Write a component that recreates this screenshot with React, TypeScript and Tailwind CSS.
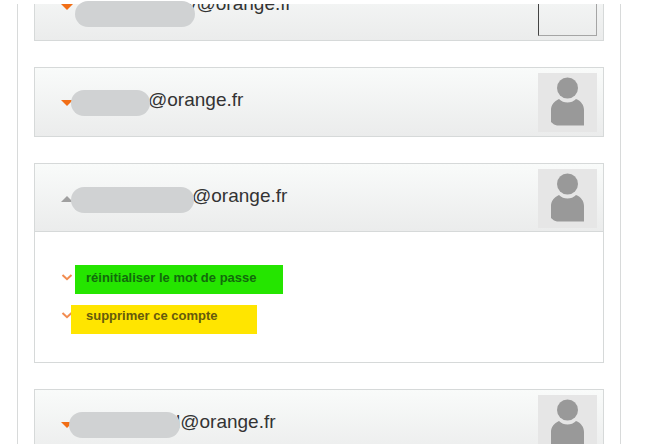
import React, { useState } from 'react';
import clsx from 'clsx';

interface Account {
    id: string;
    email: string;
    maskClass: string;
    emailClass: string;
    hasPhoto: boolean;
}

// The mask hides the first part of each address
const accounts: Account[] = [
    { id: 'a1', email: 'y@orange.fr', maskClass: 'ml-0.5 mt-5 w-[120px]', emailClass: '-ml-2', hasPhoto: false },
    { id: 'a2', email: '@orange.fr', maskClass: '-ml-0.5 mt-1.5 w-[79px]', emailClass: '-ml-0.5', hasPhoto: true },
    { id: 'a3', email: '@orange.fr', maskClass: '-ml-0.5 mt-2 w-[123px]', emailClass: '-ml-0.5', hasPhoto: true },
    { id: 'a4', email: 'l@orange.fr', maskClass: '-ml-1 mt-1.5 w-[111px]', emailClass: '-ml-1', hasPhoto: true },
];

function Avatar() {
    return (
        <svg viewBox="0 0 59 59" className="mt-[5px] size-[59px] shrink-0 self-start bg-[#e6e6e6]" aria-hidden="true">
            <circle cx="29.5" cy="15" r="10.5" fill="#999" />
            <path d="M21 26 C25.5 30.8 33.5 30.8 38 26 C43 28 46 32 46 37 V52.5 H19 L16 51.5 L13 49 V37 C13 32 16 28.5 21 26 Z" fill="#999" />
        </svg>
    );
}

function Arrow({ open }: { open: boolean }) {
    return (
        <svg viewBox="0 0 12 6" className="mt-1.5 h-1.5 w-3 shrink-0" aria-hidden="true">
            {open ? <path d="M0 6 L6 0 L12 6 Z" fill="#a0a0a0" /> : <path d="M0 0 H12 L6 6 Z" fill="#f16e16" />}
        </svg>
    );
}

function AccountAction({ label, className }: { label: string; className: string }) {
    return (
        <li className="flex items-baseline">
            <svg viewBox="0 0 12 9" className="h-[9px] w-3 shrink-0" fill="none" aria-hidden="true">
                <path d="M1.5 2 L6 6.2 L10.5 2" stroke="#f28c50" strokeWidth="2" />
            </svg>
            <a href="#" className={clsx('relative h-[29px] text-[13px] leading-5 font-bold', className)}>
                {label}
            </a>
        </li>
    );
}

export default function App() {
    const [openId, setOpenId] = useState('a3');

    return (
        <main className="relative h-screen overflow-hidden bg-white pr-[45px] pl-[17px] font-['Liberation_Sans',Arial,sans-serif]">
            <div className="absolute inset-x-0 top-0 z-10 h-1 bg-white" />
            <div className="min-h-full overflow-hidden border-x border-[#d8dada] px-4">
                <div className="-mt-[29px] flex flex-col gap-[26px]">
                    {accounts.map((account) => {
                        const open = account.id === openId;
                        return (
                            <section key={account.id} className="border border-[#d6d9d9]">
                                <button
                                    type="button"
                                    aria-expanded={open}
                                    onClick={() => setOpenId(open ? '' : account.id)}
                                    className={clsx(
                                        'flex h-[68px] w-full items-center justify-between bg-linear-to-b from-[#f9fbfa] to-[#ebecec] pr-1.5 pl-[26px] text-left',
                                        open && 'border-b border-[#d6d9d9]'
                                    )}
                                >
                                    <span className="flex h-full items-center pb-1">
                                        <Arrow open={open} />
                                        <span className={clsx('relative z-20 h-[26px] shrink-0 rounded-full bg-[#d0d2d3]', account.maskClass)} />
                                        <span className={clsx('text-[19px] leading-6 text-[#333]', account.emailClass)}>{account.email}</span>
                                    </span>
                                    {account.hasPhoto ? (
                                        <Avatar />
                                    ) : (
                                        <span className="mt-[5px] size-[59px] shrink-0 self-start border border-[#a5a5a5] border-l-[#444]" />
                                    )}
                                </button>

                                {open && (
                                    <ul className="flex flex-col gap-[11px] bg-white pt-[33px] pr-6 pb-7 pl-[26px]">
                                        <AccountAction
                                            label="réinitialiser le mot de passe"
                                            className="ml-0.5 w-[208px] bg-[#25e500] pt-[3px] pl-[11px] text-[#126a0c]"
                                        />
                                        <AccountAction
                                            label="supprimer ce compte"
                                            className="-ml-0.5 w-[186px] bg-[#ffe500] pt-px pl-[15px] text-[#665a0c]"
                                        />
                                    </ul>
                                )}
                            </section>
                        );
                    })}
                </div>
            </div>
        </main>
    );
}
